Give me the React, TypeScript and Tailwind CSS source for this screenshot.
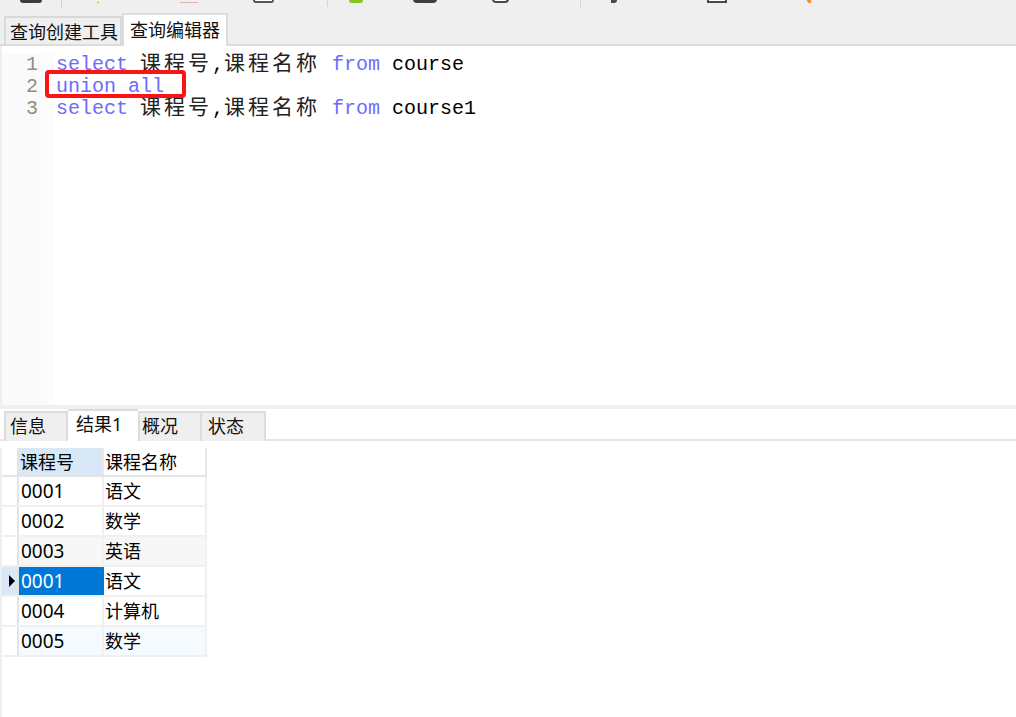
const sans = "font-['Noto_Sans','Noto_Sans_CJK_SC',sans-serif]";

const rows = [
  { id: "0001", name: "语文", bg: "bg-white" },
  { id: "0002", name: "数学", bg: "bg-white" },
  { id: "0003", name: "英语", bg: "bg-[#f7f7f7]" },
  { id: "0001", name: "语文", bg: "bg-white", current: true },
  { id: "0004", name: "计算机", bg: "bg-white" },
  { id: "0005", name: "数学", bg: "bg-[#f5fafe]" },
];

// only the bottom edge of the toolbar is in the picture
function Clip({ className, children }: { className?: string; children?: React.ReactNode }) {
  return <div className={`flex h-[3px] shrink-0 items-end overflow-hidden ${className ?? ""}`}>{children}</div>;
}

function Label({ className, children }: { className?: string; children: string }) {
  return <div className={`flex h-[1px] shrink-0 items-end overflow-hidden text-[16px] leading-[20px] whitespace-nowrap text-black ${className ?? ""}`}>{children}</div>;
}

function Toolbar() {
  return (
    <div className="flex h-[9px] items-start overflow-hidden pl-[20px]">
      <Clip className="w-[22px]"><div className="h-[3px] w-full rounded-b bg-[#3c3c3c]" /></Clip>
      <div className="ml-[19px] h-[9px] w-px shrink-0 bg-[#d4d4d4]" />
      <Clip className="ml-[35px] w-[3px]"><div className="h-[1px] w-[2px] bg-[#8fd12a]" /></Clip>
      <Label className="ml-[22px] w-[34px]">运行</Label>
      <Clip className="ml-[24px] w-[18px]"><div className="h-[1px] w-full bg-[#e2aeac]" /></Clip>
      <Label className="ml-[9px] w-[12px] text-[#555]">止</Label>
      <Clip className="ml-[34px] w-[21px]"><div className="h-[3px] w-full rounded-b-sm border-x-2 border-b-2 border-[#555] bg-white" /></Clip>
      <Label className="ml-[5px] w-[34px]">解释</Label>
      <div className="ml-[14px] h-[7px] w-px shrink-0 bg-[#d4d4d4]" />
      <Clip className="ml-[21px] w-[14px]"><div className="h-[3px] w-full rounded-b-full bg-[#86c71f]" /></Clip>
      <Label className="ml-[22px] w-[20px]">新</Label>
      <Clip className="ml-[8px] w-[24px]"><div className="h-[4px] w-full rounded-b-sm bg-[#3f3f3f]" /></Clip>
      <Label className="ml-[5px] w-[16px]">载</Label>
      <Clip className="ml-[34px] w-[17px]"><div className="h-[4px] w-full rounded-b-sm border-x-2 border-b-2 border-[#4a4a4a] bg-white" /></Clip>
      <Label className="ml-[4px] w-[38px]">另存为</Label>
      <div className="ml-[29px] h-[7px] w-px shrink-0 bg-[#d4d4d4]" />
      <Clip className="ml-[30px] w-[6px]"><div className="h-[3px] w-full rounded-br bg-[#4a4a4a]" /></Clip>
      <Label className="ml-[4px] w-[24px]">查找</Label>
      <Clip className="ml-[62px] w-[20px]"><div className="h-[3px] w-full border-x-2 border-b-2 border-[#4a4a4a] bg-white" /></Clip>
      <Label className="ml-[9px] w-[14px]">替</Label>
      <Clip className="ml-[57px] w-[5px]"><div className="h-[3px] w-[4px] rounded-bl bg-[#f58a1f]" /></Clip>
      <Label className="ml-[40px] w-[34px]">美化</Label>
    </div>
  );
}

function EditorTabs() {
  return (
    <div className="flex h-[36px] items-end pl-[4px]">
      <div className="-mb-px flex h-[30px] w-[118px] items-center border-x-2 border-t-2 border-[#d9d9d9] pl-[4px] text-[18px] whitespace-nowrap text-[#111]">
        查询创建工具
      </div>
      <div className="relative -mb-px flex h-[33px] w-[106px] items-center border-x-2 border-t-2 border-[#dcdcdc] bg-white pl-[6px] text-[18px] whitespace-nowrap text-[#111]">
        查询编辑器
      </div>
    </div>
  );
}

function Keyword({ children }: { children: string }) {
  return <span className="text-[#6b6bff]">{children}</span>;
}

function Cjk({ children }: { children: string }) {
  return <span className="font-['Noto_Sans_CJK_SC',sans-serif] text-[21px] leading-[0px] tracking-[3px] text-[#222]">{children}</span>;
}

function SelectLine({ table }: { table: string }) {
  return (
    <div className="h-[22px] whitespace-pre">
      <Keyword>select</Keyword>{" "}<Cjk>课程号</Cjk>,<Cjk>课程名称</Cjk>{" "}<Keyword>from</Keyword>{" "}{table}
    </div>
  );
}

function Editor() {
  return (
    <div className="relative h-[359px] border-l-2 border-[#efefef] bg-white pt-[7px]">
      <div className="flex h-full">
        <div className="w-[40px] bg-[#fafafa] pt-[1px] pr-[4px] text-right font-['Liberation_Mono',monospace] text-[20px] leading-[22px] text-[#8f8f80]">
          <div>1</div>
          <div>2</div>
          <div>3</div>
        </div>
        <div className="w-[12px] bg-[#fcfcfc]" />
        <div className="pt-[1px] pl-[2px] font-['Liberation_Mono',monospace] text-[20px] leading-[22px] text-black">
          <SelectLine table="course" />
          <div className="h-[22px] whitespace-pre"><Keyword>union all</Keyword></div>
          <SelectLine table="course1" />
        </div>
      </div>
      <div className="absolute top-[24px] left-[43px] h-[28px] w-[141px] rounded-[4px] border-4 border-[#fb1414]" />
    </div>
  );
}

function ResultTabs() {
  const tab = "-mb-[2px] flex h-[30px] w-[64px] items-center border-t-2 border-r-2 border-[#dcdcdc] bg-[#efefef] pb-[2px] text-[18px] text-[#111]";
  return (
    <div className="flex h-[32px] items-end border-b-2 border-[#e6e6e6] pl-[4px]">
      <div className={`${tab} border-l-2 pl-[4px]`}>信息</div>
      <div className="-mb-[2px] flex h-[32px] w-[70px] items-start border-t-2 border-[#dcdcdc] bg-white pl-[8px] text-[18px] leading-[26px] text-[#111]">结果1</div>
      <div className={`${tab} border-l-2 pl-[2px]`}>概况</div>
      <div className={`${tab} pl-[6px]`}>状态</div>
    </div>
  );
}

function ResultGrid() {
  return (
    <div className="mt-[7px] w-[207px] border-l-2 border-[#efefef] text-[18px] text-black">
      <div className="flex h-[29px] border-b-2 border-[#e4e4e4]">
        <div className="w-[17px] border-r-2 border-[#e4e4e4]" />
        <div className="flex w-[85px] items-center border-r-2 border-[#e8e8e8] bg-[#d8e8f7] pt-[2px] pl-[1px]">课程号</div>
        <div className="flex w-[103px] items-center border-r-2 border-[#e8e8e8] pt-[2px] pl-[1px]">课程名称</div>
      </div>
      {rows.map((row, i) => (
        <div key={i} className={`flex h-[30px] border-b-2 border-[#f0f0f0] ${row.bg}`}>
          <div className={`flex w-[17px] items-center justify-end border-r-2 border-[#e4e4e4] pr-[2px] ${row.current ? "bg-[#d8e8f7]" : "bg-white"}`}>
            {row.current && <div className="h-0 w-0 border-y-[6px] border-l-[6px] border-y-transparent border-l-black" />}
          </div>
          <div className={`flex w-[85px] items-center border-r-2 pl-[2px] text-[19px] ${row.current ? "border-[#0078d7] bg-[#0078d7] text-white" : "border-[#f0f0f0]"}`}>{row.id}</div>
          <div className="flex w-[103px] items-center border-r-2 border-[#f0f0f0] pl-[1px]">{row.name}</div>
        </div>
      ))}
    </div>
  );
}

export default function App() {
  return (
    <div className={`h-[717px] w-[1016px] overflow-hidden bg-white ${sans}`}>
      <div className="h-[46px] border-b-2 border-[#dcdcdc] bg-[#efefef]">
        <Toolbar />
        <EditorTabs />
      </div>
      <Editor />
      <div className="h-[4px] bg-[#efefef]" />
      <ResultTabs />
      <div className="h-[276px] border-l-2 border-[#efefef]">
        <div className="-ml-[2px]"><ResultGrid /></div>
      </div>
    </div>
  );
}
